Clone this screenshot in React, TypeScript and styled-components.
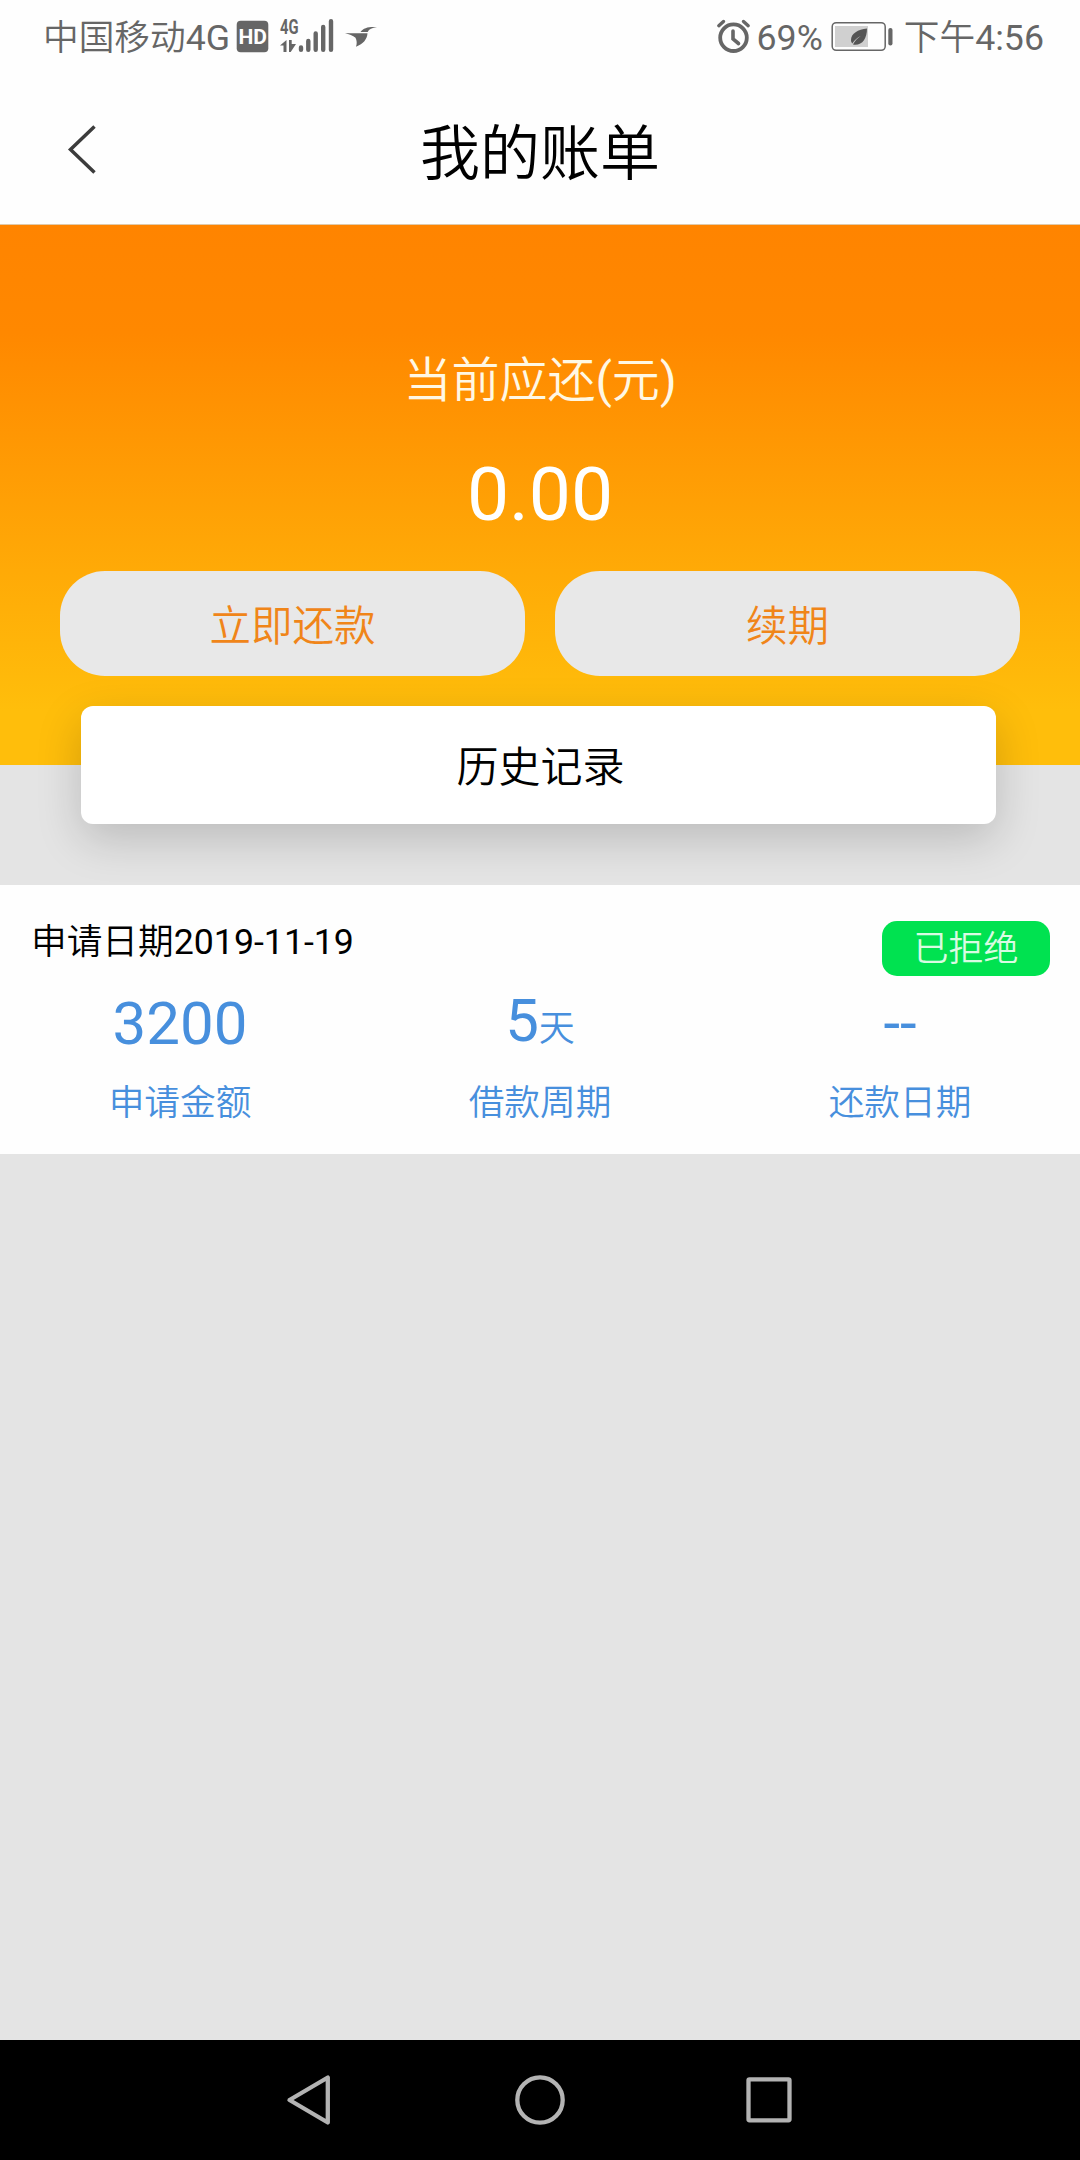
import React from "react";
import styled, { createGlobalStyle } from "styled-components";

const Global = createGlobalStyle`
  * { box-sizing: border-box; }
  body { margin: 0; background: #e4e4e4; }
`;

const Screen = styled.div`
  width: 1080px;
  height: 2160px;
  display: flex;
  flex-direction: column;
  overflow: hidden;
  background: #e4e4e4;
  font-family: Roboto, "Noto Sans CJK SC", sans-serif;
  font-weight: 400;
  color: #000;
`;

const CJK = styled.span`
  font-weight: 350;
`;

const StatusBar = styled.div`
  height: 75px;
  flex: none;
  display: flex;
  justify-content: space-between;
  padding: 0 36px 0 43px;
  background: #fefefe;
  color: #666;
  font-size: 35.700px;
  line-height: 77px;
`;

const StatusGroup = styled.div`
  display: flex;
  white-space: nowrap;
`;

const StatusIcon = styled.svg`
  display: block;
  height: 75px;
  flex: none;
`;

const Header = styled.header`
  height: 150px;
  flex: none;
  display: grid;
  grid-template-columns: 160px 1fr 160px;
  align-items: center;
  background: #fefefe;
  border-bottom: 1px solid #e0c9a8;
`;

const BackButton = styled.button`
  width: 160px;
  height: 149px;
  padding: 0;
  border: 0;
  background: none;
`;

const Title = styled.h1`
  margin: 0;
  text-align: center;
  font-size: 60px;
  font-weight: 350;
  line-height: 80px;
  padding-top: 10px;
`;

const Hero = styled.section`
  height: 540px;
  flex: none;
  display: flex;
  flex-direction: column;
  align-items: center;
  padding: 120px 60px 0;
  background: linear-gradient(180deg, #ff8400 0%, #ff8800 20%, #ffbe0b 90%, #ffbe0b 100%);
`;

const DueLabel = styled.div`
  height: 72px;
  line-height: 72px;
  font-size: 48px;
  color: #fff8e4;
`;

const DueAmount = styled.div`
  height: 100px;
  margin-top: 27px;
  line-height: 100px;
  font-size: 75px;
  color: #fff;
`;

const Actions = styled.div`
  display: flex;
  gap: 30px;
  width: 960px;
  margin-top: 27px;
`;

const PillButton = styled.button`
  flex: 1;
  height: 105px;
  padding: 6px 0 0;
  border: 0;
  border-radius: 45px;
  background: #e8e8e8;
  color: #f08519;
  font: 350 41.500px/60px Roboto, "Noto Sans CJK SC", sans-serif;
`;

const HistoryCard = styled.div`
  flex: none;
  width: 915px;
  height: 118px;
  margin-top: 30px;
  margin-right: 4px;
  padding-left: 5px;
  border-radius: 12px;
  background: #fff;
  box-shadow: 0 15px 45px rgba(0, 0, 0, 0.18);
  text-align: center;
  font-size: 42px;
  font-weight: 350;
  line-height: 123px;
`;

const Record = styled.section`
  flex: none;
  height: 269px;
  margin-top: 120px;
  background: #fefefe;
  z-index: 1;
`;

const RecordHead = styled.div`
  display: flex;
  justify-content: space-between;
  align-items: flex-start;
  height: 92px;
  padding: 36px 30px 0 31px;
`;

const RecordDate = styled.div`
  font-size: 35.700px;
  line-height: 43px;
`;

const Badge = styled.div`
  width: 168px;
  height: 55px;
  border-radius: 15px;
  background: #00e250;
  color: #d9fbe2;
  text-align: center;
  font-size: 35px;
  font-weight: 350;
  line-height: 57px;
`;

const Columns = styled.div`
  display: grid;
  grid-template-columns: repeat(3, 1fr);
  color: #478fdd;
  text-align: center;
`;

const Value = styled.div<{ $lift?: number }>`
  height: 94px;
  line-height: 94px;
  font-size: 60px;
  margin-top: ${(p) => -(p.$lift ?? 0)}px;
  margin-bottom: ${(p) => p.$lift ?? 0}px;
`;

const Unit = styled.span`
  font-size: 36px;
  font-weight: 350;
`;

const Caption = styled.div`
  font-size: 35.700px;
  font-weight: 350;
  line-height: 65px;
`;

const NavBar = styled.nav`
  height: 120px;
  margin-top: auto;
  flex: none;
  display: flex;
  justify-content: center;
  align-items: center;
  gap: 170px;
  background: #000;
`;

const NavIcon = styled.svg`
  display: block;
  width: 60px;
  height: 60px;
  fill: none;
  stroke: #b3b3b3;
  stroke-width: 4.300;
  stroke-linejoin: round;
`;

const MiniText = styled.text`
  font-family: Roboto, sans-serif;
  font-weight: 700;
`;

function SignalIcons() {
  return (
    <StatusIcon width="152" viewBox="230 0 152 75" fill="#666">
      <rect x="236.7" y="20.7" width="31.6" height="31.6" rx="4" />
      <MiniText x="238.500" y="44" fontSize="21" fill="#fefefe" textLength="28.500" lengthAdjust="spacingAndGlyphs">HD</MiniText>
      <MiniText x="280" y="34" fontSize="20" textLength="18.5" lengthAdjust="spacingAndGlyphs">4G</MiniText>
      <path d="M286.500 40v12h-3v-6.500h-3.500zM289 40h2.700v4h4.300l-5.300 8h-1.700z" />
      <g stroke="#666" strokeWidth="4.400" strokeLinecap="round">
        <path d="M301 47.500v2.300M308.300 41v8.800M315.700 33.500v16.300M323.200 27v22.800M331 21.200v28.600" />
      </g>
      <path d="M345 33c6 .3 11 .3 15.500.3h7c-.4 6-4 10.500-11.500 13.500 1.200-3.500.8-6.500-.5-9C353 35.300 349 34.300 345 33z" />
      <path d="M360.500 32C363.500 27.500 369 26.500 377 27c-5 .7-8 2-9.300 5z" />
    </StatusIcon>
  );
}

function AlarmIcon() {
  return (
    <StatusIcon width="43" viewBox="714 0 43 75" fill="none" stroke="#666" strokeLinecap="round">
      <circle cx="733.500" cy="37.700" r="13.300" strokeWidth="3.800" />
      <path d="M733 31v8l5.500 4.500" strokeWidth="3.600" />
      <path d="M718.800 25.700l4.700-4.200M748.200 25.700l-4.700-4.200" strokeWidth="3.400" />
    </StatusIcon>
  );
}

function BatteryIcon() {
  return (
    <StatusIcon width="81" viewBox="823 0 81 75" fill="none">
      <rect x="832.200" y="22.700" width="53" height="27.600" rx="4" stroke="#666" strokeWidth="1.500" />
      <rect x="835" y="26" width="33" height="21" fill="#d0d0d0" />
      <rect x="888.300" y="28" width="4.200" height="17.500" rx="2" fill="#666" />
      <path d="M867 28.500c-9 1-16 5-16 11.500 0 1.700.6 2.700 1.300 3.500 2.500-3.500 5-6 8.500-7.500-3.500 2.300-6 5-7.800 8.600C862 46 867 39 867 28.500z" fill="#555" />
    </StatusIcon>
  );
}

export default function App() {
  return (
    <Screen>
      <Global />
      <StatusBar>
        <StatusGroup>
          <span><CJK>中国移动</CJK>4G</span>
          <SignalIcons />
        </StatusGroup>
        <StatusGroup>
          <AlarmIcon />
          <span>69%</span>
          <BatteryIcon />
          <span><CJK>下午</CJK>4:56</span>
        </StatusGroup>
      </StatusBar>
      <Header>
        <BackButton aria-label="返回">
          <svg width="160" height="149" viewBox="0 75 160 149" fill="none" stroke="#3c3c3c" strokeWidth="3.500">
            <path d="M94.500 126.500L70.500 149.500l24 23" />
          </svg>
        </BackButton>
        <Title>我的账单</Title>
      </Header>
      <Hero>
        <DueLabel><CJK>当前应还</CJK>(<CJK>元</CJK>)</DueLabel>
        <DueAmount>0.00</DueAmount>
        <Actions>
          <PillButton>立即还款</PillButton>
          <PillButton>续期</PillButton>
        </Actions>
        <HistoryCard>历史记录</HistoryCard>
      </Hero>
      <Record>
        <RecordHead>
          <RecordDate><CJK>申请日期</CJK>2019-11-19</RecordDate>
          <Badge>已拒绝</Badge>
        </RecordHead>
        <Columns>
          <div>
            <Value>3200</Value>
            <Caption>申请金额</Caption>
          </div>
          <div>
            <Value $lift={3}>5<Unit>天</Unit></Value>
            <Caption>借款周期</Caption>
          </div>
          <div>
            <Value>--</Value>
            <Caption>还款日期</Caption>
          </div>
        </Columns>
      </Record>
      <NavBar>
        <NavIcon viewBox="0 0 60 60"><path d="M47.800 7.500v45L9.500 30z" /></NavIcon>
        <NavIcon viewBox="0 0 60 60"><circle cx="30" cy="30" r="22.700" /></NavIcon>
        <NavIcon viewBox="0 0 60 60"><rect x="8.500" y="9.300" width="41" height="41" rx="1" /></NavIcon>
      </NavBar>
    </Screen>
  );
}
